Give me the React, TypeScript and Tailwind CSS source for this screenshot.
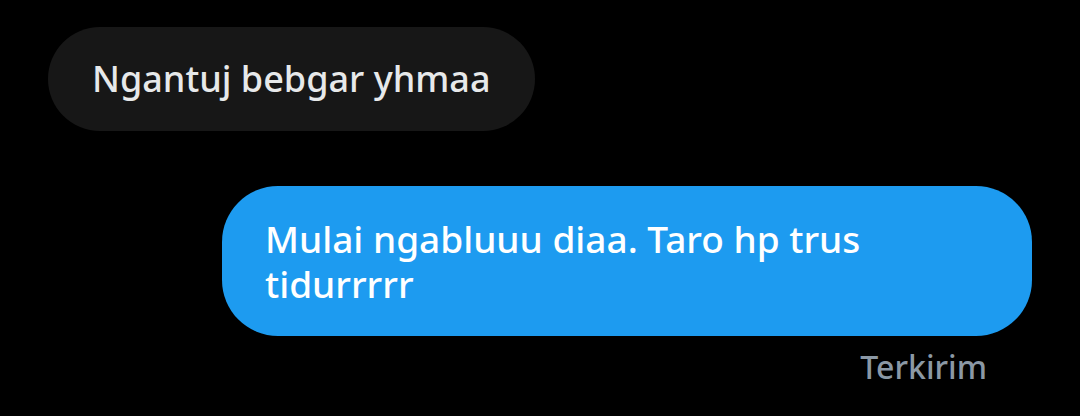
import React from "react";

export default function App() {
  return (
    <div
      className="w-[1080px] h-[416px] bg-black flex flex-col overflow-hidden"
      style={{ fontFamily: '"Noto Sans", "Open Sans", sans-serif' }}
    >
      <div className="pt-[27px] pl-[48px] flex">
        <div className="bg-[#171717] rounded-full pl-[44px] pr-[44px] py-[27px] text-[36px] leading-[50px] font-medium text-[#e7e9ea]">
          Ngantuj bebgar yhmaa
        </div>
      </div>
      <div className="mt-[55px] pr-[48px] flex justify-end">
        <div className="bg-[#1d9bf0] rounded-[56px] w-[810px] pl-[43px] pr-[43px] py-[30px] text-[37px] leading-[45px] font-medium text-white">
          Mulai ngabluuu diaa. Taro hp trus tidurrrrr
        </div>
      </div>
      <div className="mt-[11px] pr-[93px] flex justify-end">
        <span className="text-[32px] leading-[40px] font-medium text-[#8b98a5]">Terkirim</span>
      </div>
    </div>
  );
}
